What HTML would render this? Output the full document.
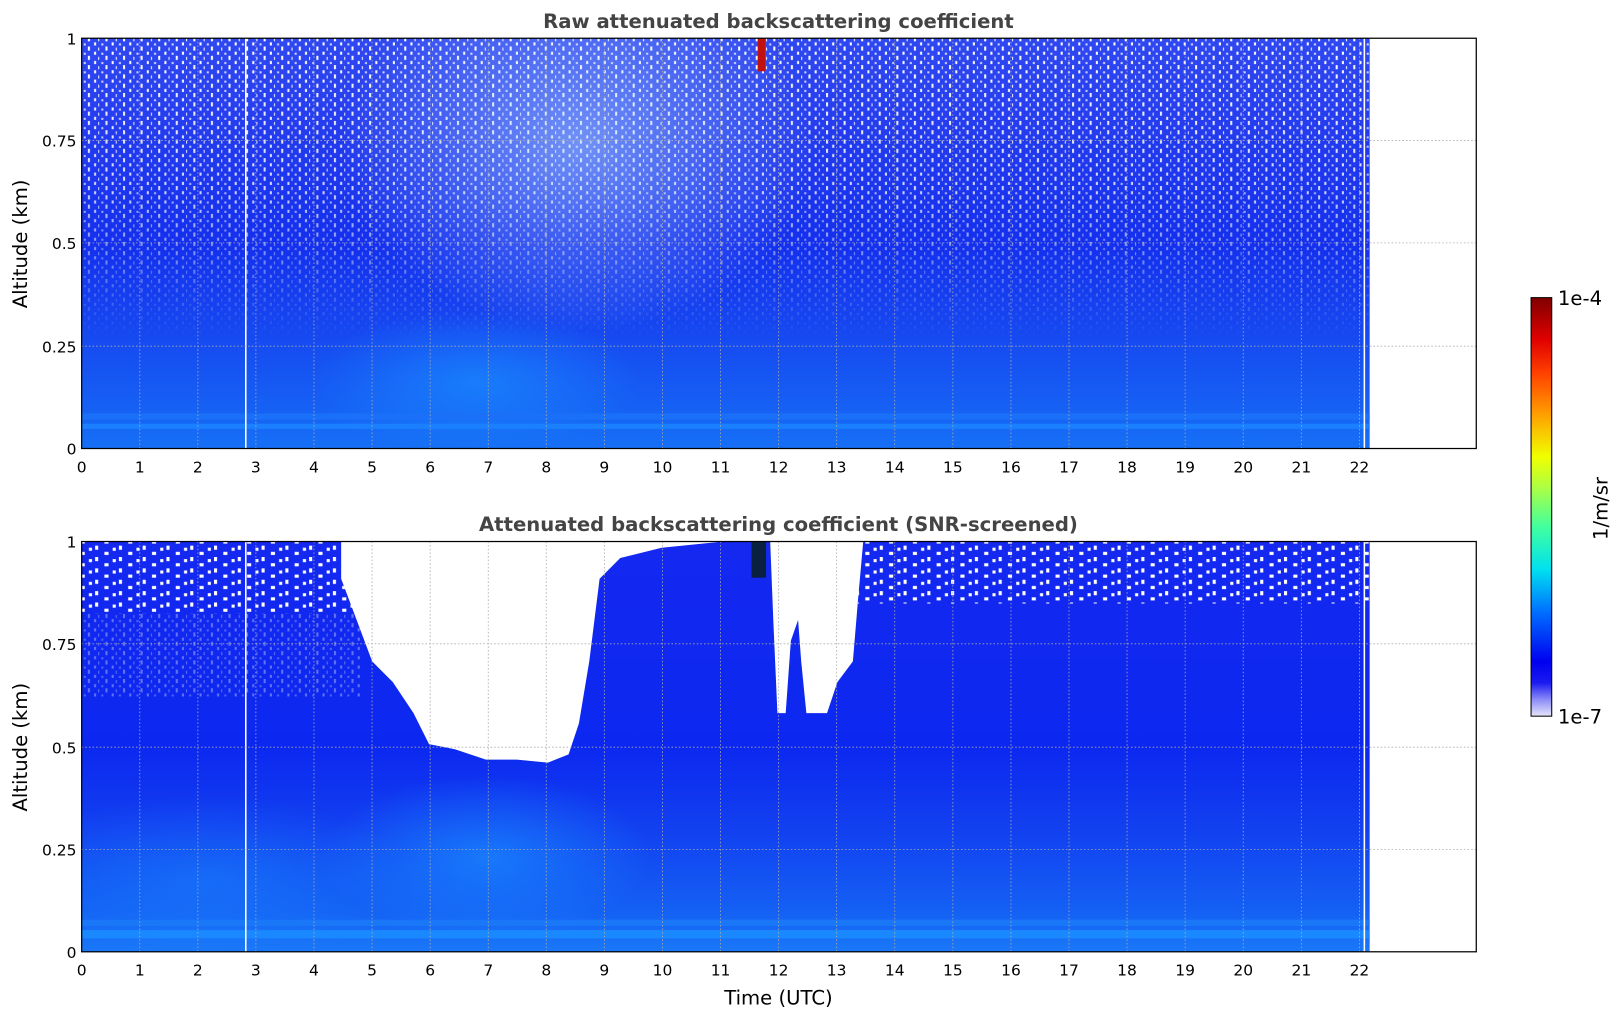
<!DOCTYPE html>
<html><head><meta charset="utf-8"><style>
html,body{margin:0;padding:0;background:#fff;width:1621px;height:1020px;overflow:hidden}
svg{display:block}
text{font-family:"DejaVu Sans","Liberation Sans",sans-serif}
</style></head><body>
<svg width="1621" height="1020" viewBox="0 0 1568 987" preserveAspectRatio="none" xmlns="http://www.w3.org/2000/svg">
<defs>
<clipPath id="ct"><rect x="79" y="37" width="1246" height="397"/></clipPath>
<clipPath id="cb"><rect x="79" y="524" width="1246" height="397"/></clipPath>
<linearGradient id="topv" x1="0" y1="0" x2="0" y2="1">
<stop offset="0" stop-color="#3048f0"/>
<stop offset="0.3" stop-color="#2038ee"/>
<stop offset="0.5" stop-color="#1430ee"/>
<stop offset="0.7" stop-color="#1646f0"/>
<stop offset="0.9" stop-color="#1660f4"/>
<stop offset="1" stop-color="#1670f6"/>
</linearGradient>
<linearGradient id="botv" x1="0" y1="0" x2="0" y2="1">
<stop offset="0" stop-color="#1428f0"/>
<stop offset="0.5" stop-color="#0c28f0"/>
<stop offset="0.7" stop-color="#1240f0"/>
<stop offset="0.9" stop-color="#1460f4"/>
<stop offset="1" stop-color="#1a78f8"/>
</linearGradient>
<linearGradient id="jet" x1="0" y1="1" x2="0" y2="0">
<stop offset="0" stop-color="#e6e6fa"/>
<stop offset="0.04" stop-color="#8a8af8"/>
<stop offset="0.08" stop-color="#1a1af0"/>
<stop offset="0.13" stop-color="#0000f0"/>
<stop offset="0.25" stop-color="#0070ff"/>
<stop offset="0.35" stop-color="#00e0f0"/>
<stop offset="0.45" stop-color="#40ffa0"/>
<stop offset="0.55" stop-color="#b0ff40"/>
<stop offset="0.62" stop-color="#f0ff00"/>
<stop offset="0.72" stop-color="#ffa000"/>
<stop offset="0.82" stop-color="#ff4000"/>
<stop offset="0.9" stop-color="#e00000"/>
<stop offset="1" stop-color="#800000"/>
</linearGradient>
<pattern id="noise" width="17" height="9" patternUnits="userSpaceOnUse">
<rect x="0" y="0" width="2" height="4" fill="#fff"/>
<rect x="6" y="5" width="2" height="3" fill="#fff"/>
<rect x="10" y="1" width="1" height="3" fill="#fff"/>
<rect x="13" y="6" width="2" height="2" fill="#fff" opacity="0.8"/>
</pattern>
<pattern id="noise2" width="23" height="11" patternUnits="userSpaceOnUse">
<rect x="0" y="0" width="3" height="4" fill="#fff"/>
<rect x="9" y="6" width="4" height="3" fill="#fff"/>
<rect x="17" y="2" width="3" height="3" fill="#fff"/>
</pattern>
<linearGradient id="fadeN" x1="0" y1="0" x2="0" y2="1">
<stop offset="0" stop-color="#fff" stop-opacity="1"/>
<stop offset="0.5" stop-color="#fff" stop-opacity="0.8"/>
<stop offset="1" stop-color="#fff" stop-opacity="0"/>
</linearGradient>
<mask id="nm"><rect x="79" y="37" width="1246" height="290" fill="url(#fadeN)"/></mask>
<radialGradient id="light" cx="0.5" cy="0.5" r="0.5">
<stop offset="0" stop-color="#1a8cff" stop-opacity="0.7"/>
<stop offset="1" stop-color="#1a8cff" stop-opacity="0"/>
</radialGradient>
<radialGradient id="lightTop" cx="0.5" cy="0.5" r="0.5">
<stop offset="0" stop-color="#c0e8ff" stop-opacity="0.5"/>
<stop offset="1" stop-color="#c0e8ff" stop-opacity="0"/>
</radialGradient>
</defs>

<!-- TOP PLOT -->
<text x="753" y="27" text-anchor="middle" font-size="19" font-weight="bold" fill="#444">Raw attenuated backscattering coefficient</text>
<g clip-path="url(#ct)">
<rect x="79" y="37" width="1246" height="397" fill="url(#topv)"/>
<rect x="79" y="37" width="1246" height="290" fill="url(#noise)" mask="url(#nm)"/>
<ellipse cx="560" cy="140" rx="230" ry="180" fill="url(#lightTop)"/>
<ellipse cx="460" cy="370" rx="160" ry="70" fill="url(#light)"/>
<rect x="79" y="400" width="1246" height="6" fill="#1a70f8"/>
<rect x="79" y="410" width="1246" height="5" fill="#1a80ff"/>
<rect x="733" y="37" width="7" height="32" fill="#c01010"/>
<rect x="237" y="37" width="1.5" height="397" fill="#fff"/>
<rect x="1319" y="37" width="1.5" height="397" fill="#fff"/>
</g>

<!-- BOTTOM PLOT -->
<text x="753" y="514" text-anchor="middle" font-size="19" font-weight="bold" fill="#444">Attenuated backscattering coefficient (SNR-screened)</text>
<g clip-path="url(#cb)">
<rect x="79" y="524" width="1246" height="397" fill="url(#botv)"/>
<ellipse cx="470" cy="830" rx="160" ry="80" fill="url(#light)"/>
<ellipse cx="200" cy="850" rx="200" ry="80" fill="url(#light)" opacity="0.6"/>
<rect x="79" y="890" width="1246" height="6" fill="#1a78f8"/>
<rect x="79" y="900" width="1246" height="8" fill="#1a88ff"/>
<rect x="79" y="524" width="270" height="70" fill="url(#noise2)"/>
<rect x="79" y="594" width="270" height="80" fill="url(#noise)" opacity="0.35"/>
<rect x="830" y="524" width="495" height="60" fill="url(#noise2)"/>
<path d="M330 524 L330 560 L345 600 L360 640 L380 660 L400 690 L415 720 L440 725 L470 735 L500 735 L530 738 L550 730 L560 700 L570 640 L575 600 L580 560 L600 540 L640 530 L700 524 Z" fill="#fff"/>
<path d="M745 524 L748 600 L752 690 L760 690 L765 620 L772 600 L775 640 L780 690 L800 690 L810 660 L825 640 L830 580 L835 524 Z" fill="#fff"/>
<rect x="727" y="524" width="14" height="35" fill="#0a2040"/>
<rect x="237" y="524" width="1.5" height="397" fill="#fff"/>
<rect x="1319" y="524" width="1.5" height="397" fill="#fff"/>
</g>

<!-- grids, axes -->
<g stroke="#aaa" stroke-width="0.8" stroke-dasharray="1.5,2" fill="none">
<path d="M79 136H1428M79 235H1428M79 335H1428M79 623H1428M79 723H1428M79 822H1428"/>
<path d="M135.2 37V434M191.4 37V434M247.5 37V434M303.7 37V434M359.9 37V434M416.1 37V434M472.3 37V434M528.4 37V434M584.6 37V434M640.8 37V434M697 37V434M753.2 37V434M809.3 37V434M865.5 37V434M921.7 37V434M977.9 37V434M1034 37V434M1090.2 37V434M1146.4 37V434M1202.6 37V434M1258.8 37V434M1315 37V434"/>
<path d="M135.2 524V921M191.4 524V921M247.5 524V921M303.7 524V921M359.9 524V921M416.1 524V921M472.3 524V921M528.4 524V921M584.6 524V921M640.8 524V921M697 524V921M753.2 524V921M809.3 524V921M865.5 524V921M921.7 524V921M977.9 524V921M1034 524V921M1090.2 524V921M1146.4 524V921M1202.6 524V921M1258.8 524V921M1315 524V921"/>
</g>
<rect x="79" y="37" width="1349" height="397" fill="none" stroke="#000" stroke-width="1.2"/>
<rect x="79" y="524" width="1349" height="397" fill="none" stroke="#000" stroke-width="1.2"/>

<g font-size="15" fill="#000" text-anchor="end">
<text x="74" y="43">1</text><text x="74" y="142">0.75</text><text x="74" y="241">0.5</text><text x="74" y="341">0.25</text><text x="74" y="440">0</text>
<text x="74" y="530">1</text><text x="74" y="629">0.75</text><text x="74" y="729">0.5</text><text x="74" y="828">0.25</text><text x="74" y="927">0</text>
</g>
<g font-size="15" fill="#000" text-anchor="middle">
<text x="79" y="457">0</text><text x="135.2" y="457">1</text><text x="191.4" y="457">2</text><text x="247.5" y="457">3</text><text x="303.7" y="457">4</text><text x="359.9" y="457">5</text><text x="416.1" y="457">6</text><text x="472.3" y="457">7</text><text x="528.4" y="457">8</text><text x="584.6" y="457">9</text><text x="640.8" y="457">10</text><text x="697" y="457">11</text><text x="753.2" y="457">12</text><text x="809.3" y="457">13</text><text x="865.5" y="457">14</text><text x="921.7" y="457">15</text><text x="977.9" y="457">16</text><text x="1034" y="457">17</text><text x="1090.2" y="457">18</text><text x="1146.4" y="457">19</text><text x="1202.6" y="457">20</text><text x="1258.8" y="457">21</text><text x="1315" y="457">22</text>
<text x="79" y="944">0</text><text x="135.2" y="944">1</text><text x="191.4" y="944">2</text><text x="247.5" y="944">3</text><text x="303.7" y="944">4</text><text x="359.9" y="944">5</text><text x="416.1" y="944">6</text><text x="472.3" y="944">7</text><text x="528.4" y="944">8</text><text x="584.6" y="944">9</text><text x="640.8" y="944">10</text><text x="697" y="944">11</text><text x="753.2" y="944">12</text><text x="809.3" y="944">13</text><text x="865.5" y="944">14</text><text x="921.7" y="944">15</text><text x="977.9" y="944">16</text><text x="1034" y="944">17</text><text x="1090.2" y="944">18</text><text x="1146.4" y="944">19</text><text x="1202.6" y="944">20</text><text x="1258.8" y="944">21</text><text x="1315" y="944">22</text>
</g>
<text x="753" y="972" text-anchor="middle" font-size="19">Time (UTC)</text>
<text transform="translate(26 236) rotate(-90)" text-anchor="middle" font-size="19">Altitude (km)</text>
<text transform="translate(26 723) rotate(-90)" text-anchor="middle" font-size="19">Altitude (km)</text>

<rect x="1481" y="288" width="20" height="405" fill="url(#jet)" stroke="#000" stroke-width="1"/>
<text x="1507" y="295" font-size="19">1e-4</text>
<text x="1507" y="700" font-size="19">1e-7</text>
<text transform="translate(1555 492) rotate(-90)" text-anchor="middle" font-size="19">1/m/sr</text>
</svg>
</body></html>
